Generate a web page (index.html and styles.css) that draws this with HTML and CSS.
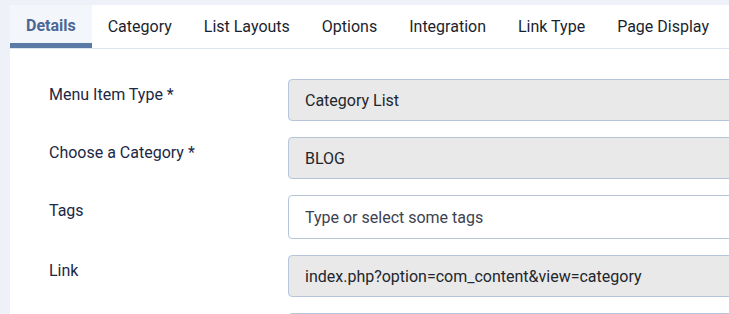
FILE: index.html
```html
<!DOCTYPE html>
<html lang="en">
<head>
<meta charset="utf-8">
<title>Menu Item</title>
<link rel="stylesheet" href="styles.css">
</head>
<body>
<div class="panel">
  <nav class="tabs">
    <div class="tab active">Details</div>
    <div class="tab">Category</div>
    <div class="tab">List Layouts</div>
    <div class="tab">Options</div>
    <div class="tab">Integration</div>
    <div class="tab">Link Type</div>
    <div class="tab">Page Display</div>
  </nav>
  <div class="form">
    <div class="row">
      <label class="label">Menu Item Type *</label>
      <div class="field readonly">Category List</div>
    </div>
    <div class="row">
      <label class="label">Choose a Category *</label>
      <div class="field readonly">BLOG</div>
    </div>
    <div class="row">
      <label class="label">Tags</label>
      <div class="field placeholder">Type or select some tags</div>
    </div>
    <div class="row">
      <label class="label">Link</label>
      <div class="field readonly">index.php?option=com_content&amp;view=category</div>
    </div>
    <div class="row">
      <span class="label"></span>
      <div class="field"></div>
    </div>
  </div>
</div>
</body>
</html>
```
FILE: styles.css
```css
html, body {
  margin: 0;
  padding: 0;
  height: 100%;
  overflow: hidden;
}
body {
  background: #eef2f8;
  font-family: Roboto, "Noto Sans", sans-serif;
  font-size: 16px;
  color: #1c2744;
}
.panel {
  margin: 5px 0 0 10px;
  background: #ffffff;
  min-height: 400px;
}
.tabs {
  display: flex;
  border-bottom: 1px solid #dfe5f0;
  height: 43px;
}
.tab {
  padding: 0 16px;
  display: flex;
  align-items: center;
  color: #1b1f2e;
  white-space: nowrap;
  box-sizing: border-box;
  height: 43px;
}
.tab.active {
  background: #f3f6fa;
  color: #4a6797;
  font-weight: 700;
  box-shadow: inset 0 -5px 0 #5b7aa5;
  padding-bottom: 2px;
}
.form {
  padding: 30px 0 0 39px;
  display: flex;
  flex-direction: column;
  gap: 16px;
}
.row {
  display: grid;
  grid-template-columns: 239px 600px;
  align-items: start;
}
.label {
  padding-top: 5px;
  line-height: 22px;
  color: #1c2744;
}
.field {
  box-sizing: border-box;
  height: 42px;
  border: 1px solid #b7c5dc;
  border-radius: 4px;
  padding: 0 16px;
  display: flex;
  align-items: center;
  color: #22262d;
  background: #ffffff;
  white-space: nowrap;
}
.field.readonly {
  background: #e9e9e9;
}
.field.placeholder {
  height: 44px;
  color: #3d4250;
}
```
